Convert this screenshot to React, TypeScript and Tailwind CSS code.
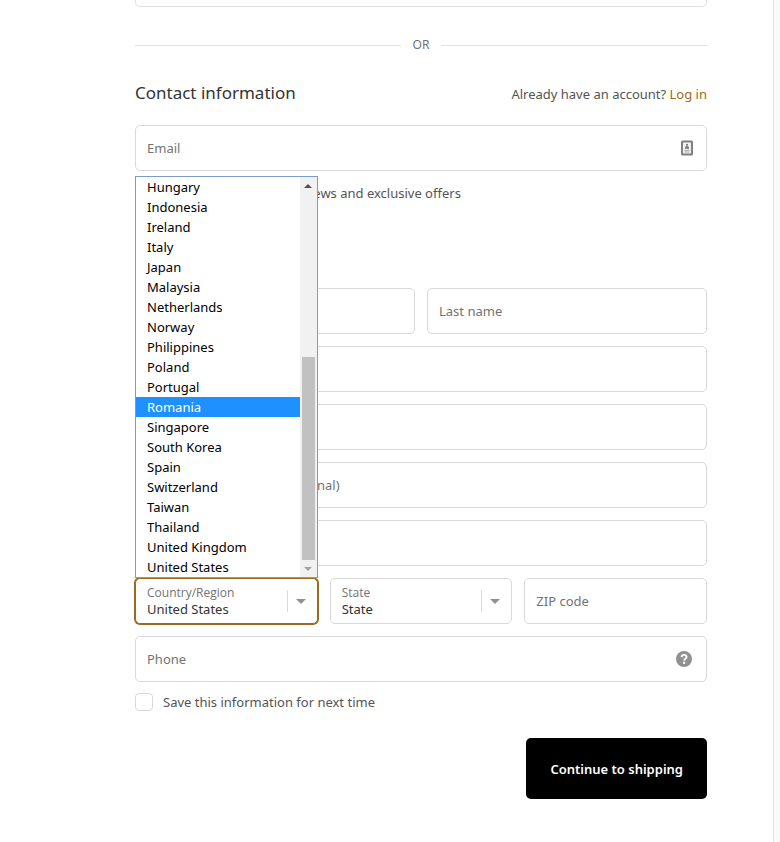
import { useState } from "react";
import type { ReactNode } from "react";

const countries = [
  "Hungary",
  "Indonesia",
  "Ireland",
  "Italy",
  "Japan",
  "Malaysia",
  "Netherlands",
  "Norway",
  "Philippines",
  "Poland",
  "Portugal",
  "Romania",
  "Singapore",
  "South Korea",
  "Spain",
  "Switzerland",
  "Taiwan",
  "Thailand",
  "United Kingdom",
  "United States",
];

function IconContactCard() {
  return (
    <svg className="w-3 h-4" viewBox="0 0 12 16" fill="none" aria-hidden="true">
      <rect x="1" y="1.5" width="10" height="13" rx="0.5" fill="#f2f2f2" stroke="#808080" strokeWidth="2" />
      <circle cx="6" cy="4.8" r="1.1" fill="#777" />
      <path d="M4 8.8V7.8C4 6.7 4.8 6 6 6S8 6.7 8 7.8v1z" fill="#777" />
      <path d="M3.5 10.2h5M3.5 12h5" stroke="#a5a5a5" strokeWidth="1" />
    </svg>
  );
}

function IconHelp() {
  return (
    <svg className="size-4" viewBox="0 0 16 16" aria-hidden="true">
      <circle cx="8" cy="8" r="8" fill="#919191" />
      <path
        d="M5.6 6.1C5.7 4.7 6.6 3.9 8.1 3.9c1.4 0 2.4.8 2.4 2 0 .9-.5 1.4-1.2 1.9-.8.5-1.1.8-1.1 1.6"
        fill="none"
        stroke="#fff"
        strokeWidth="1.9"
      />
      <circle cx="8.1" cy="11.8" r="1.2" fill="#fff" />
    </svg>
  );
}

function Caret({ className }: { className: string }) {
  return (
    <svg className={className} viewBox="0 0 10 5" preserveAspectRatio="none" aria-hidden="true">
      <path d="M0 0h10L5 5z" fill="currentColor" />
    </svg>
  );
}

type FieldProps = {
  label: string;
  type?: string;
  children?: ReactNode;
};

function Field({ label, type = "text", children }: FieldProps) {
  return (
    <div className="relative min-w-0">
      <input
        type={type}
        aria-label={label}
        placeholder={label}
        className="block w-full h-[46px] px-[11px] bg-white border border-[#d9d9d9] rounded-[5px] text-[#333] placeholder:text-[#737373] outline-none"
      />
      {children}
    </div>
  );
}

type SelectFieldProps = {
  id: string;
  label: string;
  value: string;
  options: string[];
  focused?: boolean;
  onChange: (value: string) => void;
  children?: ReactNode;
};

function SelectField({ id, label, value, options, focused, onChange, children }: SelectFieldProps) {
  return (
    <div className="relative min-w-0">
      <label
        htmlFor={id}
        className="absolute left-3 top-[7px] font-['Open_Sans',sans-serif] text-xs leading-4 text-[#737373] pointer-events-none"
      >
        {label}
      </label>
      <select
        id={id}
        value={value}
        onChange={(e) => onChange(e.target.value)}
        className={
          focused
            ? "block w-full h-[46px] pt-4 pl-[11px] pr-9 appearance-none bg-white border border-[#9c6a1d] ring-1 ring-[#9c6a1d] rounded-[5px] text-[#333] outline-none"
            : "block w-full h-[46px] pt-4 pl-[11px] pr-9 appearance-none bg-white border border-[#d9d9d9] rounded-[5px] text-[#333] outline-none"
        }
      >
        {options.map((option) => (
          <option key={option}>{option}</option>
        ))}
      </select>
      <span className="absolute right-3 inset-y-3 flex items-center pl-2 border-l border-[#d9d9d9] pointer-events-none">
        <Caret className="w-[10px] h-[5px] text-[#919191]" />
      </span>
      {children}
    </div>
  );
}

type CountryListProps = {
  active: string;
  onHover: (country: string) => void;
  onPick: (country: string) => void;
};

function CountryList({ active, onHover, onPick }: CountryListProps) {
  return (
    <div className="absolute bottom-full inset-x-0 z-10 flex bg-white border border-[#7b9ccb]">
      <ul role="listbox" aria-label="Country/Region" className="flex-1 text-black">
        {countries.map((country) => (
          <li
            key={country}
            role="option"
            aria-selected={country === active}
            onMouseEnter={() => onHover(country)}
            onClick={() => onPick(country)}
            className={country === active ? "h-5 pl-[11px] leading-5 bg-[#1e90ff] text-white" : "h-5 pl-[11px] leading-5"}
          >
            {country}
          </li>
        ))}
      </ul>
      <div className="w-[17px] flex flex-col items-center bg-[#f1f1f1]">
        <span className="h-[17px] flex items-center">
          <Caret className="w-2 h-1 rotate-180 text-[#505050]" />
        </span>
        <span className="flex-1" />
        <span className="w-[13px] h-[203px] bg-[#c1c1c1]" />
        <span className="h-[17px] flex items-center">
          <Caret className="w-2 h-1 text-[#a3a3a3]" />
        </span>
      </div>
    </div>
  );
}

function CheckRow({ id, label }: { id: string; label: string }) {
  return (
    <div className="flex items-center gap-2.5 h-5">
      <input
        id={id}
        type="checkbox"
        className="size-[18px] appearance-none bg-white border border-[#d9d9d9] rounded-[4px] checked:bg-black"
      />
      <label htmlFor={id} className="text-[#545454]">
        {label}
      </label>
    </div>
  );
}

export default function App() {
  const [country, setCountry] = useState("United States");
  const [active, setActive] = useState("Romania");
  const [open, setOpen] = useState(true);
  const [region, setRegion] = useState("State");

  const pickCountry = (value: string) => {
    setCountry(value);
    setOpen(false);
  };

  return (
    <div className="min-h-screen flex bg-white font-['Noto_Sans','Open_Sans',sans-serif] text-[13px] leading-5 text-[#545454]">
      <main className="flex-1 min-w-0 pl-[135px] pr-[66px] pb-10">
        <div className="h-[7px] border border-t-0 border-[#e1e1e1] rounded-b-[5px]" />

        <div className="mt-7 flex items-center gap-3 text-xs leading-5 text-[#737373]">
          <span className="flex-1 h-px bg-[#e1e1e1]" />
          OR
          <span className="flex-1 h-px bg-[#e1e1e1]" />
        </div>

        <form onSubmit={(e) => e.preventDefault()}>
          <div className="mt-[25px] mb-[19px] flex items-baseline justify-between">
            <h2 className="text-[17px] leading-[26px] text-[#333]">Contact information</h2>
            <p>
              Already have an account? <a href="#login" className="text-[#9c6a1d]">Log in</a>
            </p>
          </div>

          <Field label="Email" type="email">
            <span className="absolute right-[14px] inset-y-0 flex items-center">
              <IconContactCard />
            </span>
          </Field>
          <div className="mt-3">
            <CheckRow id="newsletter" label="Keep me up to date on news and exclusive offers" />
          </div>

          <section aria-label="Shipping address" className="mt-[85px] flex flex-col gap-3">
            <div className="grid grid-cols-2 gap-3">
              <Field label="First name" />
              <Field label="Last name" />
            </div>
            <Field label="Company (optional)" />
            <Field label="Address" />
            <Field label="Apartment, suite, etc. (optional)" />
            <Field label="City" />
            <div className="grid grid-cols-3 gap-3">
              <SelectField
                id="country"
                label="Country/Region"
                value={country}
                options={countries}
                focused
                onChange={setCountry}
              >
                {open && <CountryList active={active} onHover={setActive} onPick={pickCountry} />}
              </SelectField>
              <SelectField
                id="state"
                label="State"
                value={region}
                options={["State", "Alabama", "California", "New York", "Texas"]}
                onChange={setRegion}
              />
              <Field label="ZIP code" />
            </div>
            <Field label="Phone" type="tel">
              <span className="absolute right-[15px] inset-y-0 flex items-center">
                <IconHelp />
              </span>
            </Field>
          </section>

          <div className="mt-[10px]">
            <CheckRow id="save-info" label="Save this information for next time" />
          </div>

          <div className="mt-[26px] flex justify-end">
            <button type="submit" className="h-[61px] px-6 rounded-[5px] bg-black font-semibold text-white">
              Continue to shipping
            </button>
          </div>
        </form>
      </main>
      <aside className="w-[7px] bg-[#fafafa] border-l border-[#e1e1e1]" />
    </div>
  );
}
